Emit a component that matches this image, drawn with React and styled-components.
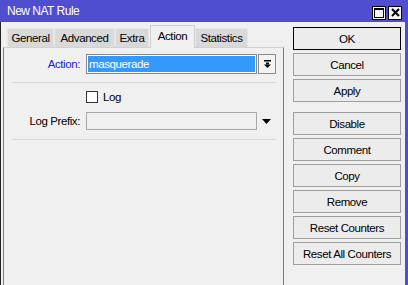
import React from 'react';
import styled, { createGlobalStyle } from 'styled-components';

const GlobalStyle = createGlobalStyle`
  html, body {
    margin: 0;
    padding: 0;
    background: #f0f0f0;
    overflow: hidden;
  }
  body {
    font-family: "Liberation Sans", Arial, sans-serif;
    font-size: 11.5px;
    letter-spacing: -0.4px;
    color: #000;
  }
`;

const Window = styled.div`
  width: 408px;
  height: 285px;
  display: flex;
  flex-direction: column;
  background: #f0f0f0;
  overflow: hidden;
`;

const TitleBar = styled.div`
  height: 22px;
  flex: none;
  background: #4e4ecf;
  display: flex;
  align-items: center;
  padding: 0 6px 0 7px;
  box-sizing: border-box;
`;

const Title = styled.div`
  flex: 1;
  color: #fff;
  font-size: 12px;
  letter-spacing: -0.5px;
`;

const TitleButtons = styled.div`
  display: flex;
  gap: 2px;
  margin-top: 3px;
`;

const TitleButton = styled.div`
  width: 14px;
  height: 14px;
  box-sizing: border-box;
  border: 1px solid #000;
  background: #f4f4f4;
  display: flex;
  align-items: center;
  justify-content: center;
`;

const Body = styled.div`
  flex: 1;
  display: flex;
  border-left: 1px solid #222;
  border-right: 3px solid #4e4ecf;
  min-height: 0;
`;

const LeftCol = styled.div`
  width: 281px;
  margin-left: 2px;
  display: flex;
  flex-direction: column;
`;

const TabBar = styled.div`
  height: 25px;
  flex: none;
  display: flex;
  align-items: flex-end;
  padding-left: 4px;
  position: relative;
  z-index: 1;
`;

const Tab = styled.div`
  width: ${({ $w }) => $w}px;
  height: ${({ $active }) => ($active ? '23px' : '19px')};
  box-sizing: border-box;
  margin-left: ${({ $active }) => ($active ? '1px' : '0')};
  margin-bottom: ${({ $active }) => ($active ? '-1px' : '0')};
  display: flex;
  align-items: center;
  justify-content: center;
  background: ${({ $active }) => ($active ? '#f0f0f0' : '#d9d9d9')};
  border: 1px solid ${({ $active }) => ($active ? '#cfcfcf' : '#e6e6e6')};
  border-bottom: ${({ $active }) => ($active ? 'none' : '1px solid #d9d9d9')};
  padding-bottom: ${({ $active }) => ($active ? '3px' : '0')};
`;

const Panel = styled.div`
  flex: 1;
  border: 1px solid #7c7c7c;
  border-top-color: #d2d2d2;
  border-bottom: none;
  padding: 6px 7px 0 0;
  display: flex;
  flex-direction: column;
`;

const Row = styled.div`
  display: flex;
  align-items: center;
  height: ${({ $h }) => $h || 20}px;
  margin-top: ${({ $mt }) => $mt || 0}px;
`;

const Label = styled.div`
  width: 76px;
  margin-right: 6px;
  text-align: right;
  flex: none;
  color: ${({ $blue }) => ($blue ? '#1d1de0' : '#000')};
`;

const SelectBox = styled.div`
  flex: 1;
  height: 100%;
  box-sizing: border-box;
  border: 1px solid #8a8a8a;
  padding: 1px;
  background: #fff;
  display: flex;
`;

const Selected = styled.div`
  flex: 1;
  background: #3399ff;
  color: #fff;
  display: flex;
  align-items: center;
  padding-left: 1px;
`;

const DropButton = styled.div`
  width: 18px;
  height: 100%;
  margin-left: 1px;
  box-sizing: border-box;
  border: 1px solid #8a8a8a;
  background: #f4f4f4;
  display: flex;
  align-items: center;
  justify-content: center;
`;

const TextBox = styled.div`
  flex: 1;
  height: 100%;
  box-sizing: border-box;
  border: 1px solid #a8a8a8;
  background: #f0f0f0;
`;

const ArrowSlot = styled.div`
  width: 19px;
  height: 100%;
  display: flex;
  align-items: center;
  justify-content: center;
`;

const Separator = styled.div`
  height: 1px;
  background: #d8d8d8;
  margin: ${({ $mt }) => $mt}px 0 0 8px;
`;

const CheckRow = styled.div`
  display: flex;
  align-items: center;
  margin: 8px 0 0 82px;
  height: 12px;
  gap: 5px;
`;

const CheckBox = styled.div`
  width: 12px;
  height: 12px;
  box-sizing: border-box;
  border: 1px solid #333;
  background: #fff;
`;

const RightCol = styled.div`
  width: 108px;
  margin-left: 9px;
  padding-top: 5px;
  display: flex;
  flex-direction: column;
`;

const Button = styled.div`
  height: 23px;
  box-sizing: border-box;
  margin-top: ${({ $gap }) => $gap}px;
  border: 1px solid ${({ $default }) => ($default ? '#000' : '#9e9e9e')};
  background: #ececec;
  display: flex;
  align-items: center;
  justify-content: center;
`;

const buttons = [
  ['OK', 0, true],
  ['Cancel', 3],
  ['Apply', 3],
  ['Disable', 10],
  ['Comment', 3],
  ['Copy', 3],
  ['Remove', 3],
  ['Reset Counters', 3],
  ['Reset All Counters', 3],
];

const tabs = [
  ['General', 47],
  ['Advanced', 61],
  ['Extra', 34],
  ['Action', 45],
  ['Statistics', 53],
];

export default function App() {
  return (
    <>
      <GlobalStyle />
      <Window>
        <TitleBar>
          <Title>New NAT Rule</Title>
          <TitleButtons>
            <TitleButton>
              <svg width="10" height="10" viewBox="0 0 10 10">
                <rect x="0.5" y="0.5" width="9" height="9" fill="none" stroke="#000" />
                <rect x="0" y="0" width="10" height="2" fill="#000" />
              </svg>
            </TitleButton>
            <TitleButton>
              <svg width="9" height="9" viewBox="0 0 9 9">
                <path d="M1 1 L8 8 M8 1 L1 8" stroke="#000" strokeWidth="2" />
              </svg>
            </TitleButton>
          </TitleButtons>
        </TitleBar>
        <Body>
          <LeftCol>
            <TabBar>
              {tabs.map(([t, w]) => (
                <Tab key={t} $w={w} $active={t === 'Action'}>{t}</Tab>
              ))}
            </TabBar>
            <Panel>
              <Row>
                <Label $blue>Action:</Label>
                <SelectBox>
                  <Selected>masquerade</Selected>
                </SelectBox>
                <DropButton>
                  <svg width="9" height="8" viewBox="0 0 9 8">
                    <rect x="1" y="0" width="7" height="1.5" fill="#000" />
                    <rect x="3" y="2.5" width="3" height="2" fill="#000" />
                    <polygon points="1,4.5 8,4.5 4.5,8" fill="#000" />
                  </svg>
                </DropButton>
              </Row>
              <Separator $mt={8} />
              <CheckRow>
                <CheckBox />
                <span>Log</span>
              </CheckRow>
              <Row $h={18} $mt={9}>
                <Label>Log Prefix:</Label>
                <TextBox />
                <ArrowSlot>
                  <svg width="9" height="5" viewBox="0 0 9 5">
                    <polygon points="0,0 9,0 4.5,5" fill="#000" />
                  </svg>
                </ArrowSlot>
              </Row>
              <Separator $mt={9} />
            </Panel>
          </LeftCol>
          <RightCol>
            {buttons.map(([label, gap, def]) => (
              <Button key={label} $gap={gap} $default={def}>{label}</Button>
            ))}
          </RightCol>
        </Body>
      </Window>
    </>
  );
}
